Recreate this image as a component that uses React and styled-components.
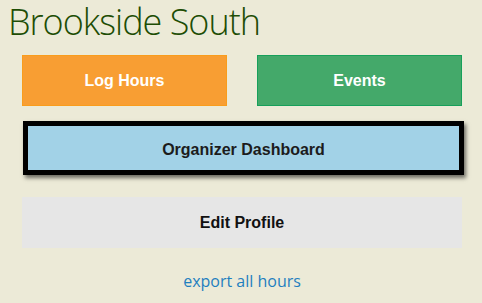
import React from 'react'
import styled, { createGlobalStyle } from 'styled-components'

const GlobalStyle = createGlobalStyle`
  body {
    margin: 0;
    background-color: #ecead7;
    font-family: 'Liberation Sans', Arial, sans-serif;
  }
`

const Page = styled.div`
  padding: 0 20px 0 8px;
`

const Title = styled.h1`
  margin: 0 0 11px;
  font-family: 'Open Sans', sans-serif;
  font-weight: 300;
  font-size: 36px;
  line-height: 44px;
  color: #1d4d04;
  letter-spacing: -1px;
`

const Actions = styled.div`
  margin-left: 14px;
  display: flex;
  flex-direction: column;
`

const Row = styled.div`
  display: flex;
  gap: 30px;
  margin-bottom: 15px;

  & > * {
    flex: 1;
  }
`

const Button = styled.a`
  display: flex;
  align-items: center;
  justify-content: center;
  box-sizing: border-box;
  height: ${(p) => p.$height || 51}px;
  background-color: ${(p) => p.$bg};
  border: 1px solid ${(p) => p.$border || p.$bg};
  color: ${(p) => p.$color || '#fff'};
  font-weight: bold;
  font-size: 16px;
  text-decoration: none;
  cursor: pointer;
`

const DashboardButton = styled(Button)`
  margin-left: 1px;
  margin-right: -2px;
  border: 5px solid #000;
  box-shadow: 2px 3px 4px rgba(0, 0, 0, 0.55);
  margin-bottom: 22px;
  padding-top: 4px;
`

const ExportLink = styled.a`
  display: block;
  margin-top: 22px;
  text-align: center;
  font-family: 'Open Sans', sans-serif;
  font-size: 16px;
  line-height: 22px;
  color: #1f7fbf;
  text-decoration: none;
`

export default function App() {
  return (
    <>
      <GlobalStyle />
      <Page>
        <Title>Brookside South</Title>
        <Actions>
          <Row>
            <Button $bg="#f89e33" $border="#f99d1c">
              Log Hours
            </Button>
            <Button $bg="#44a96a" $border="#17a05a">
              Events
            </Button>
          </Row>
          <DashboardButton $bg="#a2d2e7" $color="#1c1c1c" $height={54}>
            Organizer Dashboard
          </DashboardButton>
          <Button $bg="#e6e6e6" $color="#111">
            Edit Profile
          </Button>
          <ExportLink>export all hours</ExportLink>
        </Actions>
      </Page>
    </>
  )
}
